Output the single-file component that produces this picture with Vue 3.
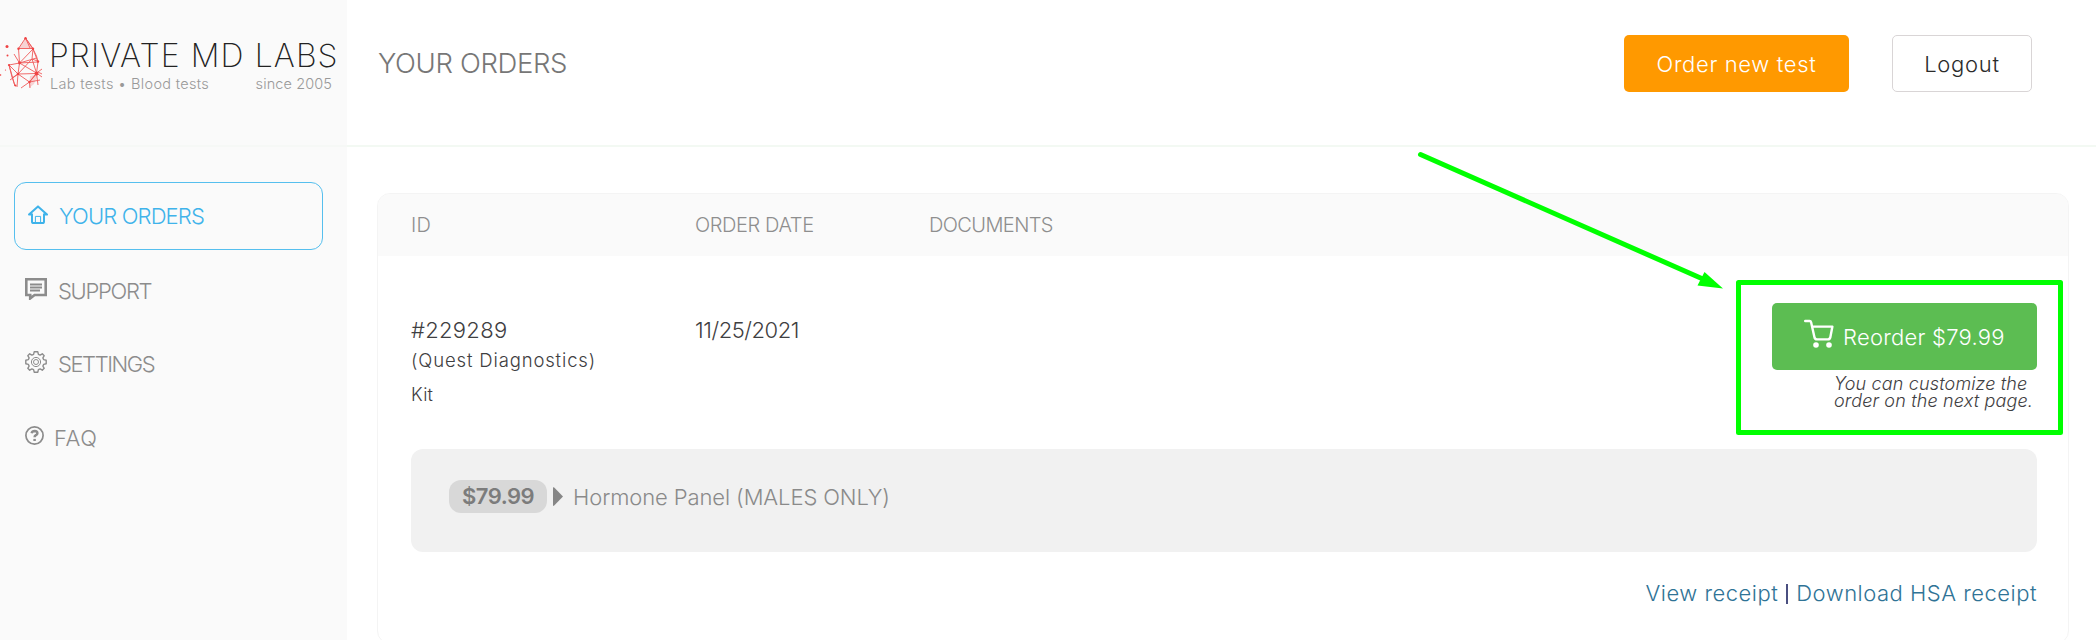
<script setup>
import { ref } from 'vue'

const activeKey = ref('orders')

const navItems = [
  { key: 'orders', label: 'YOUR ORDERS' },
  { key: 'support', label: 'SUPPORT' },
  { key: 'settings', label: 'SETTINGS' },
  { key: 'faq', label: 'FAQ' }
]

const order = {
  id: '#229289',
  lab: '(Quest Diagnostics)',
  type: 'Kit',
  date: '11/25/2021',
  price: '$79.99',
  test: 'Hormone Panel (MALES ONLY)'
}
</script>

<template>
  <div class="page">
    <aside class="sidebar">
      <div class="logo">
        <svg class="logo-mark" width="44" height="56" viewBox="0 0 44 56">
          <path class="shade" d="M25.5 2 L18 13 L33 13 Z M30 40 L29 52 L34 48 L38 38 Z" />
          <path
            class="mesh"
            d="M25.5 2 L18.5 12.5 H33 Z M25.5 2 L30 12 M33 13 L38 26 M25.5 2 L33 13 L36.5 20 L38 26
              M18.5 12.5 L19.5 27 L33 13 M33 13 L32 23 L37.5 25 M19.5 27 L36.5 22 M19.5 27 L38 26
              M19.5 27 L14 18 M19.5 27 L9 29 L18 38 Z M9 29 L12 41 M9 29 L15 50 M19.5 27 L36.5 37
              M32 23 L18 38 L36.5 37.5 M18 38 L17 51 M18 38 L29.5 46 M18 38 L10 44 M12 42 L18 38
              M32 23 L36.5 37 L38 26 M36.5 37 L29.5 46 L21 52 M29.5 46 L30 52 M29.5 46 L40 44
              M36.5 37 L42 33 M36.5 37 L42 41 M36.5 37 L38 49 M12 41 L15 50 M29.5 46 L38 36 L42 38"
          />
          <circle cx="7" cy="10.5" r="1.5" />
          <circle cx="7.5" cy="19.5" r="1" />
          <circle cx="5.5" cy="34" r="0.6" />
          <circle cx="0.5" cy="39" r="0.8" />
          <circle cx="25.5" cy="2.3" r="1.2" />
          <circle cx="18.5" cy="12.8" r="1.2" />
          <circle cx="33" cy="12.8" r="1.2" />
          <circle cx="19.5" cy="27" r="1.4" />
          <circle cx="9" cy="29" r="1.1" />
          <circle cx="18" cy="38" r="1.3" />
          <circle cx="36.5" cy="37.5" r="1.9" />
          <circle cx="29.5" cy="46" r="1.2" />
          <circle cx="38" cy="25.5" r="1.2" />
          <circle cx="15.5" cy="49.5" r="1" />
        </svg>
        <div class="logo-text">
          <div class="logo-name">PRIVATE MD LABS</div>
          <div class="logo-sub">
            <span class="logo-tag">Lab tests • Blood tests</span>
            <span class="logo-since">since 2005</span>
          </div>
        </div>
      </div>

      <nav class="nav">
        <a
          v-for="item in navItems"
          :key="item.key"
          class="nav-item"
          :class="[item.key, { active: item.key === activeKey }]"
          @click="activeKey = item.key"
        >
          <svg v-if="item.key === 'orders'" class="icon" width="20" height="20" viewBox="0 0 20 20">
            <path d="M4 8.6 V16.4 Q4 18 5.6 18 H14.4 Q16 18 16 16.4 V8.6 M4 9.6 H1 L10 1.4 L19 9.6 H16" />
            <path class="thin" d="M7.4 17.5 V11.4 H12.6 V17.5" />
          </svg>
          <svg v-else-if="item.key === 'support'" class="icon" width="22" height="22" viewBox="0 0 22 22">
            <path class="bold" d="M1.3 1.2 H20.7 V17 H9.6 L5.2 20.4 V17 H1.3 Z" />
            <path class="bar" d="M5 6.4 H17 M5 9.4 H17 M5 12.4 H15" />
          </svg>
          <svg v-else-if="item.key === 'settings'" class="icon" width="22" height="22" viewBox="0 0 22 22">
            <path
              class="gear"
              d="M9.2 0.8 H12.8 L13.4 3.4 L15.1 4.1 L17.3 2.8 L19.2 4.7 L17.9 6.9 L18.6 8.6 L21.2 9.2
                V12.8 L18.6 13.4 L17.9 15.1 L19.2 17.3 L17.3 19.2 L15.1 17.9 L13.4 18.6 L12.8 21.2
                H9.2 L8.6 18.6 L6.9 17.9 L4.7 19.2 L2.8 17.3 L4.1 15.1 L3.4 13.4 L0.8 12.8
                V9.2 L3.4 8.6 L4.1 6.9 L2.8 4.7 L4.7 2.8 L6.9 4.1 L8.6 3.4 Z"
            />
            <circle class="thin" cx="11" cy="11" r="4.6" />
            <circle class="thin" cx="11" cy="11" r="2.5" />
          </svg>
          <svg v-else class="icon" width="19" height="19" viewBox="0 0 19 19">
            <circle cx="9.5" cy="9.5" r="8.6" />
            <path class="question" d="M6.6 7.3 Q7.2 5 9.7 5 Q12.4 5.1 12.4 7.2 Q12.4 8.5 10.9 9.2 Q9.6 9.9 9.6 11.3" />
            <path class="question" d="M9.6 12.9 V15" />
          </svg>
          <span>{{ item.label }}</span>
        </a>
      </nav>
    </aside>

    <main class="main">
      <header class="header">
        <h1>YOUR ORDERS</h1>
        <div class="header-buttons">
          <button class="btn btn-order">Order new test</button>
          <button class="btn btn-logout">Logout</button>
        </div>
      </header>

      <section class="card">
        <div class="row table-head">
          <span class="th-id">ID</span>
          <span class="th-date">ORDER DATE</span>
          <span class="th-docs">DOCUMENTS</span>
        </div>

        <div class="row order-row">
          <div class="order-id">
            <div class="number">{{ order.id }}</div>
            <div class="lab">{{ order.lab }}</div>
            <div class="kind">{{ order.type }}</div>
          </div>
          <div class="date">{{ order.date }}</div>
          <div></div>
          <div class="reorder">
            <button class="btn-reorder">
              <svg width="30" height="30" viewBox="0 0 30 30">
                <path d="M1.2 2 H5.6 Q6.8 2 7.1 3.2 L10.4 18 Q10.8 20.4 13 20.4 H23.8 Q25.8 20.4 26.3 18.4 L28.4 7.6 H8.2" />
                <circle cx="12" cy="26" r="2.8" />
                <circle cx="25" cy="26" r="2.8" />
              </svg>
              <span>Reorder {{ order.price }}</span>
            </button>
            <p class="note">
              <span>You can customize the</span>
              <span>order on the next page.</span>
            </p>
          </div>
        </div>

        <div class="panel">
          <span class="price">{{ order.price }}</span>
          <svg class="caret" width="10" height="20" viewBox="0 0 10 20">
            <path d="M0 0.5 Q0.6 0 1.2 0.6 L10 9.5 L1.2 18.6 Q0.6 19.2 0 18.6 Z" />
          </svg>
          <span class="test">{{ order.test }}</span>
        </div>

        <div class="receipts">
          <a>View receipt</a>
          <span class="separator"></span>
          <a>Download HSA receipt</a>
        </div>
      </section>
    </main>

    <svg class="callout" width="2096" height="640" viewBox="0 0 2096 640">
      <line x1="1420.5" y1="154.5" x2="1704" y2="279.5" />
      <polygon points="1723,288.5 1697.5,285.5 1704.5,272" />
      <rect x="1738.5" y="282.5" width="322" height="150" />
    </svg>
  </div>
</template>

<style>
html,
body {
  overflow: hidden;
}
</style>

<style scoped>
.page {
  position: relative;
  display: flex;
  height: 640px;
  overflow: hidden;
  background-color: #fff;
  color: #3f4042;
  font-family: Inter, "Open Sans", sans-serif;
  font-size: 22px;
  font-weight: 300;
}

.page * {
  box-sizing: border-box;
}

.sidebar {
  width: 347px;
  flex: none;
  background-color: #fafafa;
}

.logo {
  display: flex;
  height: 147px;
  padding-top: 36px;
  border-bottom: 2px solid #f6f8f6;
}

.logo-mark {
  flex: none;
  fill: #ef4344;
}

.logo-mark .mesh {
  fill: none;
  stroke: #ef5a5a;
  stroke-width: 0.9;
}

.logo-mark .shade {
  fill: #f7d3d4;
}

.logo-text {
  padding-left: 5px;
}

.logo-name {
  margin-top: 3px;
  line-height: 33px;
  font-size: 32px;
  font-weight: 200;
  letter-spacing: 1.1px;
  white-space: nowrap;
  color: #222;
}

.logo-sub {
  display: flex;
  justify-content: space-between;
  width: 282px;
  margin-left: 1px;
  line-height: 23px;
  font-size: 14.5px;
  color: #999;
}

.logo-tag {
  letter-spacing: 0.33px;
}

.logo-since {
  letter-spacing: 0.1px;
}

.nav {
  display: flex;
  flex-direction: column;
  gap: 5.5px;
  padding: 35px 24px 0 14px;
}

.nav-item {
  display: flex;
  align-items: center;
  height: 68px;
  padding-left: 11px;
  color: #8c8c8c;
  cursor: pointer;
}

.nav-item + .nav-item {
  padding-top: 2px;
}

.nav-item.active {
  padding-left: 13px;
  border: 1px solid #55bfee;
  border-radius: 12px;
  color: #3fb3ea;
}

.orders span {
  margin-left: 11px;
  letter-spacing: -0.85px;
}

.support span {
  margin-left: 11px;
  letter-spacing: -1.3px;
}

.settings span {
  margin-left: 11px;
  letter-spacing: -1.45px;
}

.faq span {
  margin-left: 10px;
  letter-spacing: 0.6px;
}

.icon {
  flex: none;
  margin-top: -4px;
  fill: none;
  stroke: currentColor;
  stroke-width: 1.7;
}

.orders .icon {
  margin-top: -2px;
  stroke-width: 2;
  stroke-linejoin: round;
}

.icon .thin {
  stroke-width: 1;
}

.icon .gear {
  stroke-width: 1.4;
  stroke-linejoin: round;
}

.icon .bold {
  stroke-width: 2.6;
}

.icon .bar {
  stroke-width: 2;
}

.icon .question {
  stroke-width: 2.5;
}

.main {
  flex: 1;
}

.header {
  display: flex;
  justify-content: space-between;
  height: 147px;
  padding: 35px 64px 0 31px;
  border-bottom: 2px solid #f3f9f3;
}

h1 {
  margin: 0;
  line-height: 57px;
  font-size: 27.5px;
  font-weight: 300;
  letter-spacing: -0.35px;
  color: #777;
}

.header-buttons {
  display: flex;
  gap: 43px;
}

.btn,
.btn-reorder {
  border: none;
  padding: 0;
  font: inherit;
  cursor: pointer;
}

.btn {
  height: 57px;
  border-radius: 5px;
}

.btn-order {
  width: 225px;
  background-color: #ff9900;
  color: #fff;
  letter-spacing: 0.65px;
}

.btn-logout {
  width: 140px;
  border: 1px solid #d9d5d6;
  background-color: #fff;
  color: #2b2b2b;
  letter-spacing: 0.7px;
}

.card {
  height: 451px;
  margin: 46px 27px 0 30px;
  border: 1px solid #f4f4f4;
  border-radius: 13px;
  overflow: hidden;
}

.row {
  display: grid;
  grid-template-columns: 284px 235px 1fr auto;
  padding: 0 31px 0 33px;
}

.table-head {
  height: 62px;
  line-height: 63px;
  background-color: #fafafa;
  font-size: 20px;
  color: #8e8e8e;
}

.th-id {
  letter-spacing: 0.2px;
}

.th-date {
  letter-spacing: -0.4px;
}

.th-docs {
  margin-left: -1px;
  letter-spacing: -0.6px;
}

.order-row {
  height: 193px;
  padding-top: 47px;
}

.number,
.date {
  padding-top: 12px;
  line-height: 31px;
}

.number {
  letter-spacing: 0.3px;
}

.date {
  letter-spacing: -0.45px;
}

.lab {
  line-height: 29px;
  font-size: 18.5px;
  letter-spacing: 0.85px;
}

.kind {
  line-height: 39px;
  font-size: 18px;
  letter-spacing: 0.2px;
}

.reorder {
  display: flex;
  flex-direction: column;
  align-items: flex-end;
}

.btn-reorder {
  display: flex;
  width: 265px;
  height: 67px;
  padding-left: 32px;
  border-radius: 5px;
  background-color: #5cbd52;
  color: #fff;
  line-height: 68px;
  letter-spacing: 0.25px;
}

.btn-reorder svg {
  margin: 16px 9px 0 0;
  fill: none;
  stroke: #fff;
  stroke-width: 2.4;
  stroke-linecap: round;
  stroke-linejoin: round;
}

.btn-reorder circle {
  fill: #fff;
  stroke: none;
}

.note {
  display: flex;
  flex-direction: column;
  width: 203px;
  margin: 5px 0 0;
  line-height: 17px;
  font-size: 18px;
  font-style: italic;
  letter-spacing: 0.15px;
}

.panel {
  display: flex;
  height: 103px;
  margin: 0 31px 0 33px;
  padding: 31px 39px 0 38px;
  border-radius: 12px;
  background-color: #f1f1f1;
  line-height: 34px;
  color: #8a8a8a;
}

.price {
  width: 98px;
  height: 33px;
  border-radius: 12px;
  background-color: #d8d8d8;
  font-weight: 600;
  line-height: 33px;
  text-align: center;
  letter-spacing: -0.5px;
  color: #7c7c7c;
}

.caret {
  margin: 7px 10px 0 6px;
  fill: #868686;
}

.test {
  letter-spacing: -0.1px;
}

.receipts {
  display: flex;
  justify-content: flex-end;
  margin: 26px 31px 0 0;
  line-height: 31px;
  letter-spacing: 0.5px;
  color: #2f7396;
}

.separator {
  width: 2px;
  height: 20px;
  margin: 6px 8px 0;
  background-color: #4a4f80;
}

.callout {
  position: absolute;
  top: 0;
  left: 0;
  pointer-events: none;
  fill: none;
  stroke: #00ff00;
  stroke-width: 5;
  stroke-linecap: round;
  stroke-linejoin: round;
}

.callout polygon {
  fill: #00ff00;
  stroke: none;
}
</style>
